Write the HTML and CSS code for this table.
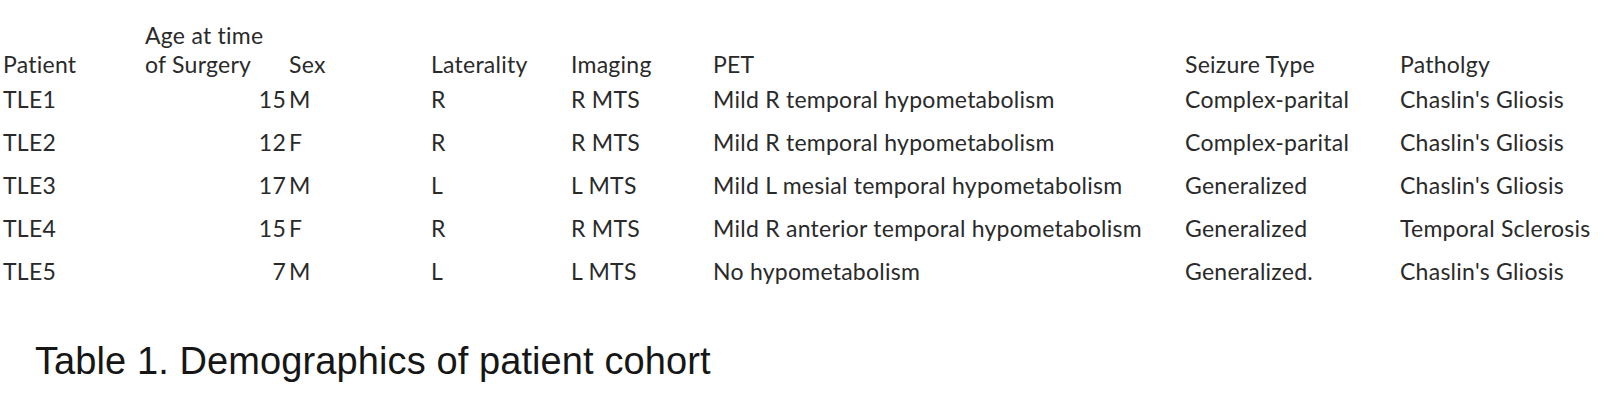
FILE: index.html
```html
<!DOCTYPE html>
<html>
<head>
<meta charset="utf-8">
<link rel="stylesheet" href="styles.css">
</head>
<body>
<div class="page">
  <table class="cohort">
    <colgroup>
      <col class="c-patient"><col class="c-age"><col class="c-sex"><col class="c-lat"><col class="c-img"><col class="c-pet"><col class="c-seiz"><col class="c-path">
    </colgroup>
    <thead>
      <tr>
        <th>Patient</th>
        <th class="age-head">Age at time<br>of Surgery</th>
        <th class="sex-head">Sex</th>
        <th>Laterality</th>
        <th>Imaging</th>
        <th>PET</th>
        <th>Seizure Type</th>
        <th>Patholgy</th>
      </tr>
    </thead>
    <tbody>
      <tr><td>TLE1</td><td class="num">15</td><td>M</td><td>R</td><td>R MTS</td><td>Mild R temporal hypometabolism</td><td>Complex-parital</td><td>Chaslin's Gliosis</td></tr>
      <tr><td>TLE2</td><td class="num">12</td><td>F</td><td>R</td><td>R MTS</td><td>Mild R temporal hypometabolism</td><td>Complex-parital</td><td>Chaslin's Gliosis</td></tr>
      <tr><td>TLE3</td><td class="num">17</td><td>M</td><td>L</td><td>L MTS</td><td>Mild L mesial temporal hypometabolism</td><td>Generalized</td><td>Chaslin's Gliosis</td></tr>
      <tr><td>TLE4</td><td class="num">15</td><td>F</td><td>R</td><td>R MTS</td><td>Mild R anterior temporal hypometabolism</td><td>Generalized</td><td>Temporal Sclerosis</td></tr>
      <tr><td>TLE5</td><td class="num">7</td><td>M</td><td>L</td><td>L MTS</td><td>No hypometabolism</td><td>Generalized.</td><td>Chaslin's Gliosis</td></tr>
    </tbody>
  </table>
  <p class="caption">Table 1. Demographics of patient cohort</p>
</div>
</body>
</html>
```
FILE: styles.css
```css
html, body {
  margin: 0;
  padding: 0;
  background: #ffffff;
}

.page {
  width: 1620px;
  height: 402px;
  padding-top: 21px;
  box-sizing: border-box;
  overflow: hidden;
}

.cohort {
  border-collapse: collapse;
  table-layout: fixed;
  width: 1617px;
  margin-left: 3px;
  font-family: Lato, "Open Sans", sans-serif;
  font-size: 23px;
  letter-spacing: 0.25px;
  color: #2a2a2a;
}

.c-patient { width: 142px; }
.c-age { width: 144px; }
.c-sex { width: 142px; }
.c-lat { width: 140px; }
.c-img { width: 142px; }
.c-pet { width: 472px; }
.c-seiz { width: 215px; }
.c-path { width: 220px; }

.cohort th,
.cohort td {
  padding: 0;
  text-align: left;
  white-space: nowrap;
  font-weight: 400;
}

.cohort th {
  line-height: 29px;
  vertical-align: bottom;
  padding-bottom: 1px;
}

.cohort td {
  line-height: 39px;
  padding-bottom: 4px;
  vertical-align: top;
}

.cohort td.num {
  text-align: right;
  padding-right: 3px;
}

.caption {
  margin: 44px 0 0 35px;
  font-family: "Liberation Sans", Arial, sans-serif;
  font-size: 38px;
  letter-spacing: 0.1px;
  line-height: 44px;
  color: #161616;
}
```
